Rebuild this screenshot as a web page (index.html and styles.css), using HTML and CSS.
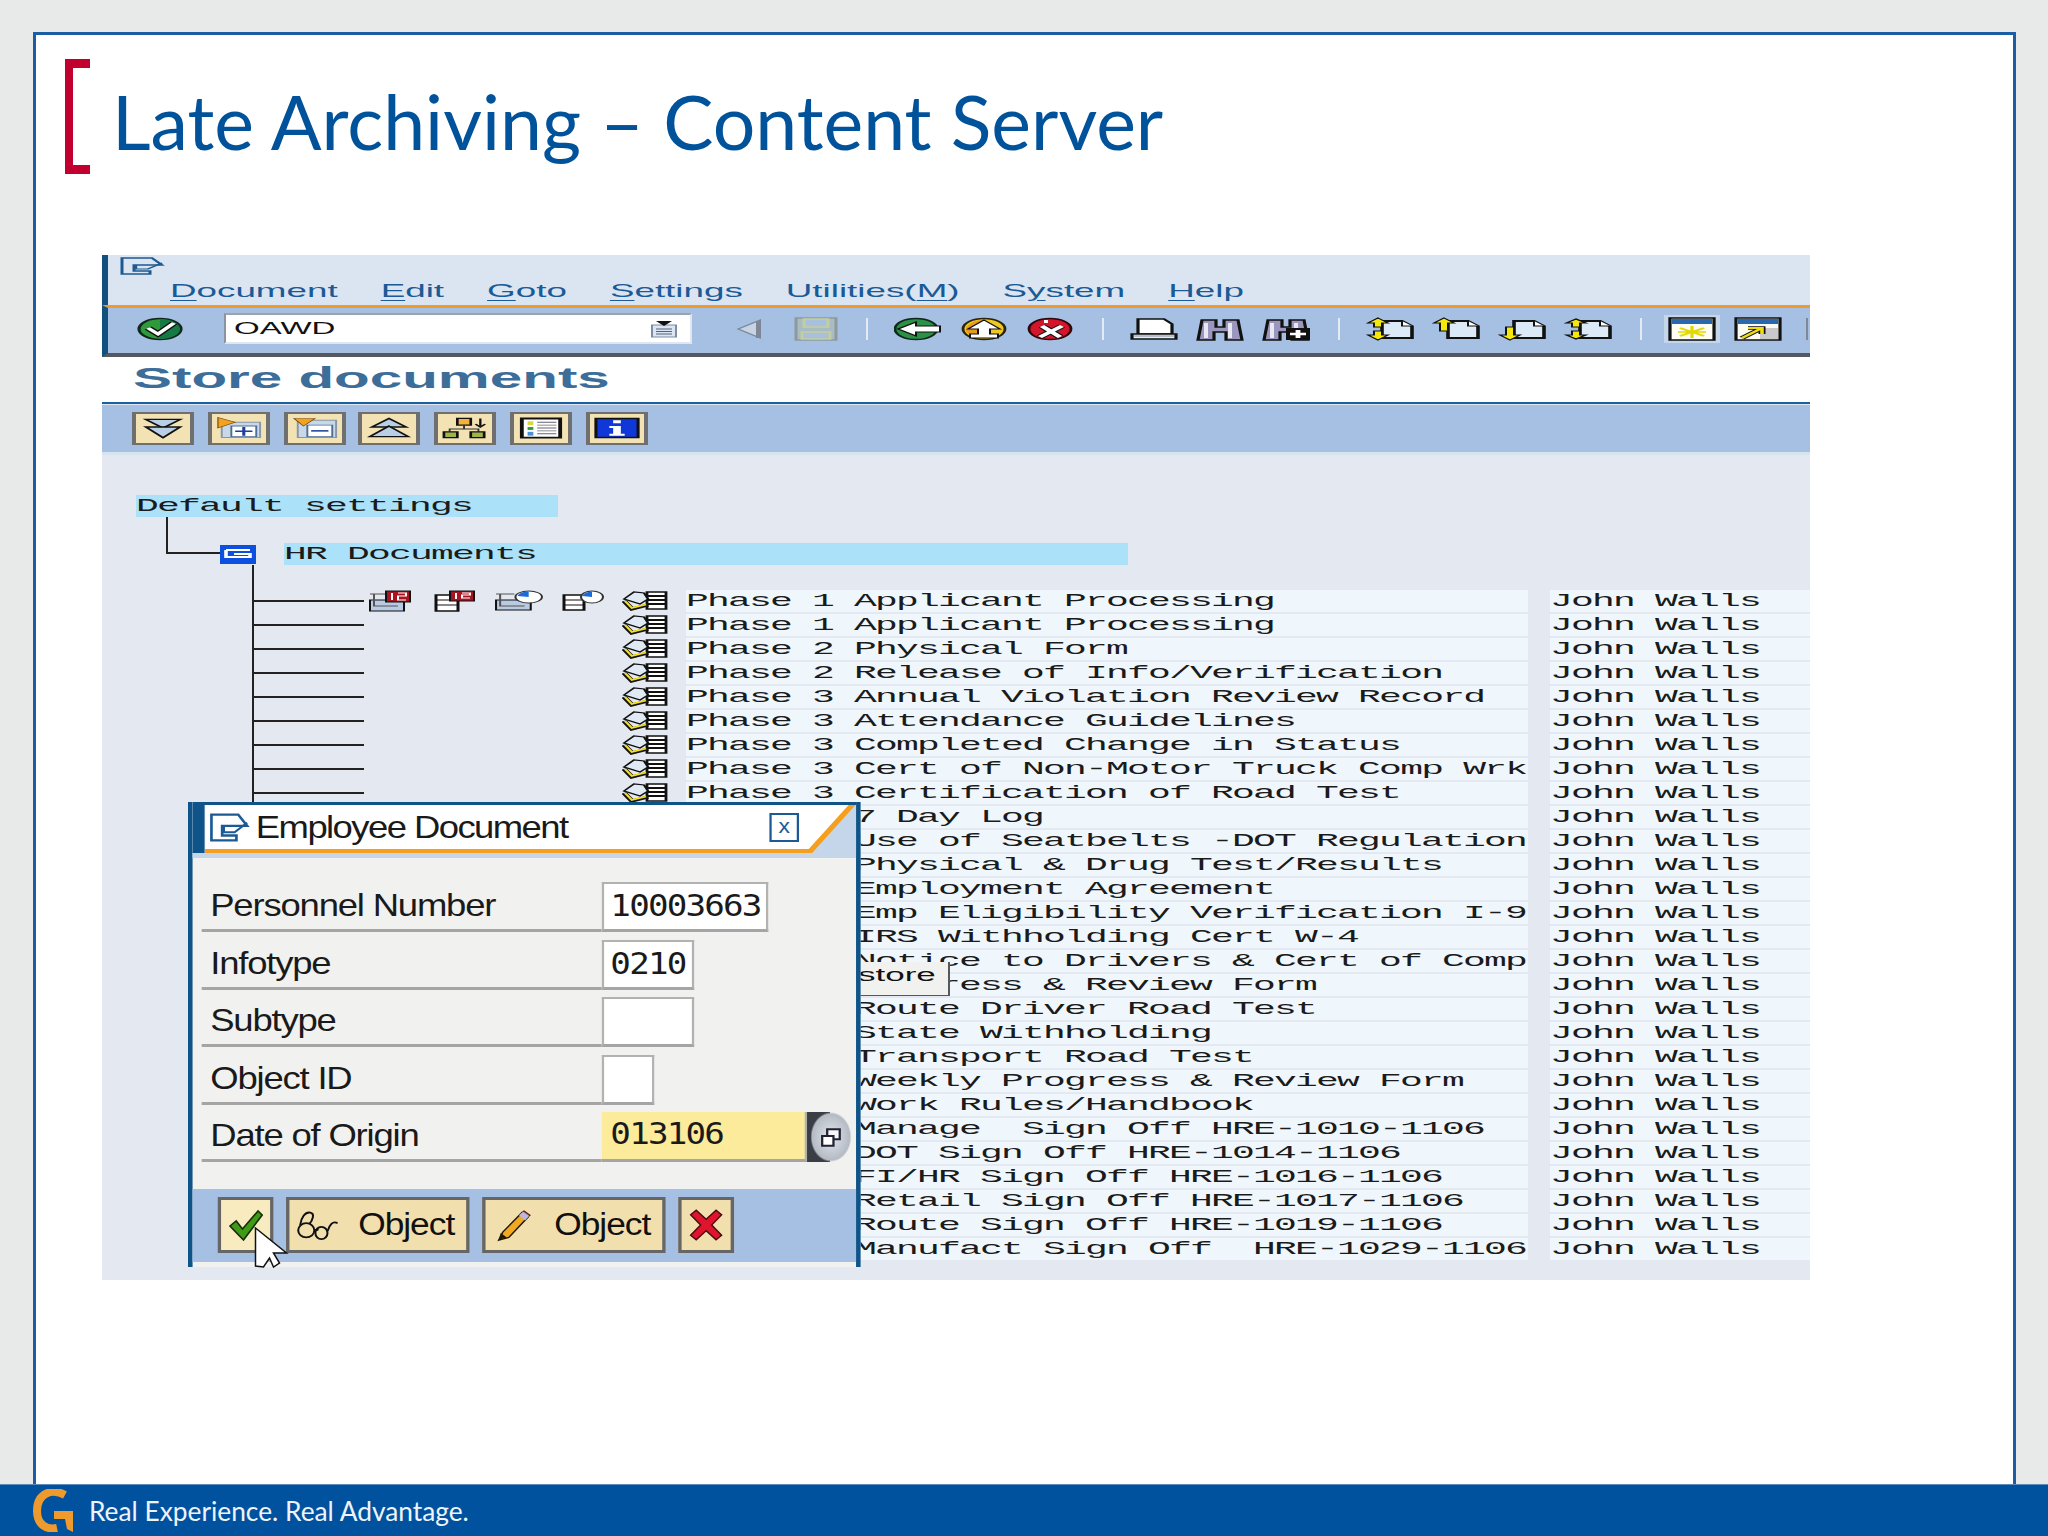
FILE: index.html
```html
<!DOCTYPE html>
<html lang="en">
<head>
  <meta charset="UTF-8">
  <title>Late Archiving - Content Server</title>
  <link rel="stylesheet" href="styles.css">
</head>
<body>
  <!-- shared icons -->
  <svg class="defs" width="0" height="0">
    <symbol id="i-doc" viewBox="0 0 23 22" preserveAspectRatio="none">
      <path d="M12.500 2h9.500v17h-9.500z" fill="#fff" stroke="#111" stroke-width="1.400"/>
      <path d="M13 6h9M13 10h9M13 14h9" stroke="#111" stroke-width="1.800"/>
      <path d="M1 9 6 2l5 1 2 6-4 5z" fill="#dfeaf4" stroke="#111" stroke-width="1.200"/>
      <path d="M1 11l4 8 8-4" fill="none" stroke="#111" stroke-width="3"/>
      <path d="M1.500 11l3.500 7 7-3.500" fill="none" stroke="#f4e010" stroke-width="1.400"/>
    </symbol>
    <symbol id="i-window" viewBox="0 0 23 18" preserveAspectRatio="none">
      <path d="M16 1H1v16h14v-3H7V8h14z" fill="none" stroke="currentColor" stroke-width="1.500"/>
      <path d="M8 8v4h6l7-6" fill="none" stroke="currentColor" stroke-width="1.200"/>
    </symbol>
    <symbol id="i-page" viewBox="0 0 24 24" preserveAspectRatio="none">
      <path d="M8 4h10l5 5v12H8z" fill="#dce9f6" stroke="#111" stroke-width="1.800"/>
      <path d="M18 4v5h5" fill="#fff" stroke="#111" stroke-width="1"/>
    </symbol>
    <symbol id="i-binoculars" viewBox="0 0 24 24" preserveAspectRatio="none">
      <path d="M3 3h7v7h4V3h7l2 20h-8v-8h-6v8H1z" fill="#9b96bd" stroke="#111" stroke-width="1.600"/>
      <path d="M4 6h2v15H4zM16 6h2v15h-2z" fill="#e8e8f2"/>
    </symbol>
  </svg>

  <div class="slide">
    <header class="slide-head">
      <div class="bracket"></div>
      <h1>Late Archiving – Content Server</h1>
    </header>

    <div class="sap-wrap">
      <div class="sap">
        <div class="menu-bar">
          <svg class="menu-icon"><use href="#i-window"/></svg>
          <ul class="menu">
            <li><u>D</u>ocument</li>
            <li><u>E</u>dit</li>
            <li><u>G</u>oto</li>
            <li><u>S</u>ettings</li>
            <li>Utilities(<u>M</u>)</li>
            <li>S<u>y</u>stem</li>
            <li><u>H</u>elp</li>
          </ul>
        </div>

        <div class="toolbar">
          <svg class="tb-icon" viewBox="0 0 24 24">
            <circle cx="12" cy="12" r="10.500" fill="#2f9a3c" stroke="#10281a" stroke-width="1.600"/>
            <path d="M12 2a10 10 0 0 1 0 20z" fill="#167a45"/>
            <path d="M6 11l5 6 8-11" fill="none" stroke="#111" stroke-width="4.500"/>
            <path d="M6 11l5 6 8-11" fill="none" stroke="#fff" stroke-width="2.500"/>
          </svg>
          <div class="cmd-field">
            <span>OAWD</span>
            <svg class="cmd-drop" viewBox="0 0 14 18" preserveAspectRatio="none">
              <path d="M1 5h12v12H1z" fill="#dbe6f2" stroke="#7c8ea3"/>
              <path d="M3 1h8L7 6z" fill="#111"/>
              <path d="M3 9h8M3 11.500h8M3 14h8" stroke="#50657d"/>
            </svg>
          </div>
          <svg class="tb-back-off" viewBox="0 0 13 24" preserveAspectRatio="none">
            <path d="M12 3v18L1 12z" fill="#c6d4e6" stroke="#7d8796"/>
            <path d="M12 3v18h-2V5z" fill="#7d8796"/>
          </svg>
          <svg class="tb-save-off" viewBox="0 0 22 24" preserveAspectRatio="none">
            <path d="M1 1h20v22H1z" fill="#a9bcc3" stroke="#8c9a9c" stroke-width="1.500"/>
            <path d="M5 2h12v8H5zM4 15h14v7H4z" fill="#a8c0dc" stroke="#c3cd9f" stroke-width="1.500"/>
          </svg>
          <i class="tb-sep"></i>
          <div class="tb-group">
            <svg class="tb-icon" viewBox="0 0 24 24">
              <circle cx="11" cy="12" r="10.500" fill="#2a9146" stroke="#10281a" stroke-width="1.400"/>
              <path d="M2 12l9-7v4h12v6H11v4z" fill="#fff" stroke="#111"/>
            </svg>
            <svg class="tb-icon" viewBox="0 0 24 24">
              <circle cx="12" cy="12" r="10.500" fill="#f0c820" stroke="#2b2410" stroke-width="1.400"/>
              <path d="M3 14a10 10 0 0 1 8-11v18a10 10 0 0 1-8-7z" fill="#e89a20"/>
              <path d="M12 3l8 9h-5v5h4v4H5v-4h4v-5H4z" fill="#fff" stroke="#111"/>
            </svg>
            <svg class="tb-icon" viewBox="0 0 24 24">
              <circle cx="12" cy="12" r="10.500" fill="#d5152a" stroke="#30080c" stroke-width="1.400"/>
              <path d="M8 9l9 11M18 9L7 20" stroke="#111" stroke-width="4.500"/>
              <path d="M8 9l9 11M18 9L7 20" stroke="#fff" stroke-width="2.800"/>
              <path d="M9 3h2v3H9z" fill="#fff"/>
            </svg>
          </div>
          <i class="tb-sep"></i>
          <div class="tb-group">
            <svg class="tb-icon" viewBox="0 0 24 24">
              <path d="M4 2h13l4 5v10H4z" fill="#fff" stroke="#111" stroke-width="1.600"/>
              <path d="M1 17h22v5H1z" fill="#e6ebf2" stroke="#111" stroke-width="1.600"/>
              <path d="M2 19h20" stroke="#8795a8"/>
            </svg>
            <svg class="tb-icon"><use href="#i-binoculars"/></svg>
            <svg class="tb-icon" viewBox="0 0 24 24">
              <use href="#i-binoculars" width="24" height="24"/>
              <path d="M12 11h12v12H12z" fill="#111"/>
              <path d="M18 13v8M14 17h8" stroke="#fff" stroke-width="2.400"/>
            </svg>
          </div>
          <i class="tb-sep"></i>
          <div class="tb-group">
            <svg class="tb-icon" viewBox="0 0 24 24">
              <use href="#i-page" width="24" height="24"/>
              <path d="M6 1l5 5H8v4H4V6H1zM6 23l5-5H8v-4H4v4H1z" fill="#f6e80c" stroke="#111"/>
            </svg>
            <svg class="tb-icon" viewBox="0 0 24 24">
              <use href="#i-page" width="24" height="24"/>
              <path d="M6 1l5 5H8v8H4V6H1z" fill="#f6e80c" stroke="#111"/>
            </svg>
            <svg class="tb-icon" viewBox="0 0 24 24">
              <use href="#i-page" width="24" height="24"/>
              <path d="M6 23l5-5H8v-8H4v8H1z" fill="#f6e80c" stroke="#111"/>
            </svg>
            <svg class="tb-icon" viewBox="0 0 24 24">
              <use href="#i-page" width="24" height="24"/>
              <path d="M6 2l5 4H8v4H4V6H1zM6 22l5-4H8v-4H4v4H1z" fill="#f6e80c" stroke="#111"/>
            </svg>
          </div>
          <i class="tb-sep"></i>
          <div class="tb-group">
            <svg class="tb-icon tb-icon-raised" viewBox="0 0 24 24">
              <path d="M1 1h22v22H1z" fill="#fdfdf4" stroke="#111" stroke-width="1.600"/>
              <path d="M2 2h20v5H2z" fill="#2a68ad"/>
              <path d="M12 9v12M6 11l12 8M18 11L6 19M5 15h14" stroke="#e3d800" stroke-width="1.600"/>
            </svg>
            <svg class="tb-icon" viewBox="0 0 24 24">
              <path d="M1 1h22v22H1z" fill="#fbfbf4" stroke="#111" stroke-width="1.600"/>
              <path d="M2 2h20v5H2z" fill="#2a68ad"/>
              <path d="M13 11h9v11H13z" fill="#c9c9c9"/>
              <path d="M4 21l9-9M7 11h7v6" fill="none" stroke="#111" stroke-width="3.500"/>
              <path d="M4 21l9-9M7 11h7v6" fill="none" stroke="#f0dc10" stroke-width="1.800"/>
            </svg>
          </div>
          <i class="tb-sep tb-sep-end"></i>
        </div>

        <div class="screen-title">Store documents</div>

        <div class="app-toolbar">
          <button class="app-btn">
            <svg viewBox="0 0 24 22">
              <path d="M3 2h18l-9 9z" fill="#b9cfe6" stroke="#111" stroke-width="1.400"/>
              <path d="M3 10h18l-9 11z" fill="#b9cfe6" stroke="#111" stroke-width="1.400"/>
            </svg>
          </button>
          <button class="app-btn">
            <svg viewBox="0 0 24 22">
              <path d="M3 5h20v16H3z" fill="#c9d8e8" stroke="#8796a8"/>
              <path d="M8 9h13v11H8z" fill="#fff" stroke="#4e6e9a"/>
              <path d="M14.500 10v9M10 14.500h9" stroke="#1c3f9c" stroke-width="1.600"/>
              <path d="M1 0l9 5-9 6z" fill="#f3a120" stroke="#6a4a10" stroke-width=".6"/>
            </svg>
          </button>
          <button class="app-btn">
            <svg viewBox="0 0 24 22">
              <path d="M3 3h20v18H3z" fill="#c9d8e8" stroke="#8796a8"/>
              <path d="M8 8h13v12H8z" fill="#fff" stroke="#4e6e9a"/>
              <path d="M10 14h9" stroke="#1c3f9c" stroke-width="1.600"/>
              <path d="M1 1h11L6 9z" fill="#f3a120" stroke="#6a4a10" stroke-width=".6"/>
            </svg>
          </button>
          <button class="app-btn">
            <svg viewBox="0 0 24 22">
              <path d="M12 1l9 9H3z" fill="#b9cfe6" stroke="#111" stroke-width="1.400"/>
              <path d="M12 9l10 11H2z" fill="#b9cfe6" stroke="#111" stroke-width="1.400"/>
            </svg>
          </button>
          <button class="app-btn">
            <svg viewBox="0 0 24 22">
              <path d="M8 1h7v7H8z" fill="#f2b33c" stroke="#111" stroke-width="1.400"/>
              <path d="M11.500 8v4M4 15v-3h15v3" fill="none" stroke="#333"/>
              <path d="M1 15h7v6H1zM15 15h7v6h-7z" fill="#9fb34a" stroke="#111" stroke-width="1.400"/>
              <path d="M20 1v8M17.500 7l2.500 3 2.500-3" fill="none" stroke="#111" stroke-width="1.200"/>
            </svg>
          </button>
          <button class="app-btn">
            <svg viewBox="0 0 24 22">
              <path d="M2 1h20v20H2z" fill="#fff" stroke="#111" stroke-width="2"/>
              <path d="M5 4h3v4H5z" fill="#d8d838"/>
              <path d="M5 10h3v3H5z" fill="#2f9a3c"/>
              <path d="M5 15h3v4H5z" fill="#4a90d8"/>
              <path d="M10 5h10M10 8h10M10 11h10M10 14h10M10 17h10" stroke="#667"/>
            </svg>
          </button>
          <button class="app-btn">
            <svg viewBox="0 0 24 22">
              <path d="M1 1h22v20H1z" fill="#1038d8" stroke="#111" stroke-width="1.600"/>
              <path d="M10 3h4v3h-4zM8 9h6v8h2v2H8v-2h2v-6H8z" fill="#fff"/>
            </svg>
          </button>
        </div>

        <div class="tree">
          <div class="tree-root">Default settings</div>
          <div class="tree-elbow"></div>
          <div class="tree-folder">
            <svg class="folder-icon" viewBox="0 0 18 20" preserveAspectRatio="none">
              <path d="M0 1h18v19H0z" fill="#0c50e0"/>
              <path d="M3 6h12M3 6v7h12v-3H7" fill="none" stroke="#fff" stroke-width="1.800"/>
            </svg>
            <span class="folder-name">HR Documents</span>
          </div>
          <ul class="doc-list">
            <li class="doc-row">
              <span class="branch"></span>
              <span class="row-icons">
                <svg class="ri-1" viewBox="0 0 22 22" preserveAspectRatio="none">
                  <path d="M1 10h17v11H1z" fill="#b8cbe2" stroke="#111"/>
                  <path d="M1 4h9M3 4v12h12" fill="none" stroke="#555"/>
                  <path d="M9 1h12v11H9z" fill="#a81420" stroke="#111"/>
                  <path d="M12 3v7M15 3h4v3h-4v4h4" fill="none" stroke="#fff"/>
                </svg>
                <svg class="ri-2" viewBox="0 0 21 22" preserveAspectRatio="none">
                  <path d="M1 5h11v16H1z" fill="#fff" stroke="#111" stroke-width="1.500"/>
                  <path d="M1 10h11M1 15h11" stroke="#111"/>
                  <path d="M8 1h12v10H8z" fill="#a81420" stroke="#111"/>
                  <path d="M11 3v6M14 3h4v2h-4v3h4" fill="none" stroke="#fff"/>
                </svg>
                <svg class="ri-3" viewBox="0 0 24 22" preserveAspectRatio="none">
                  <path d="M1 10h17v10H1z" fill="#b8cbe2" stroke="#111"/>
                  <path d="M1 4h9M3 4v12h12" fill="none" stroke="#555"/>
                  <ellipse cx="17" cy="7" rx="6.500" ry="6" fill="#fff" stroke="#333"/>
                  <path d="M17 7V1.500A6 6 0 0 0 11.500 6z" fill="#1c6ad8"/>
                </svg>
                <svg class="ri-4" viewBox="0 0 21 22" preserveAspectRatio="none">
                  <path d="M1 5h10v15H1z" fill="#fff" stroke="#111" stroke-width="1.500"/>
                  <path d="M1 10h10M1 15h10" stroke="#111"/>
                  <ellipse cx="15" cy="7" rx="5.500" ry="6" fill="#fff" stroke="#333"/>
                  <path d="M15 7V1.500A6 6 0 0 0 10 6z" fill="#1c6ad8"/>
                </svg>
              </span>
              <svg class="doc-icon"><use href="#i-doc"/></svg>
              <span class="doc-name">Phase 1 Applicant Processing</span>
              <span class="doc-user">John Walls</span>
            </li>
            <li class="doc-row"><span class="branch"></span><span class="row-icons"></span><svg class="doc-icon"><use href="#i-doc"/></svg><span class="doc-name">Phase 1 Applicant Processing</span><span class="doc-user">John Walls</span></li>
            <li class="doc-row"><span class="branch"></span><span class="row-icons"></span><svg class="doc-icon"><use href="#i-doc"/></svg><span class="doc-name">Phase 2 Physical Form</span><span class="doc-user">John Walls</span></li>
            <li class="doc-row"><span class="branch"></span><span class="row-icons"></span><svg class="doc-icon"><use href="#i-doc"/></svg><span class="doc-name">Phase 2 Release of Info/Verification</span><span class="doc-user">John Walls</span></li>
            <li class="doc-row"><span class="branch"></span><span class="row-icons"></span><svg class="doc-icon"><use href="#i-doc"/></svg><span class="doc-name">Phase 3 Annual Violation Review Record</span><span class="doc-user">John Walls</span></li>
            <li class="doc-row"><span class="branch"></span><span class="row-icons"></span><svg class="doc-icon"><use href="#i-doc"/></svg><span class="doc-name">Phase 3 Attendance Guidelines</span><span class="doc-user">John Walls</span></li>
            <li class="doc-row"><span class="branch"></span><span class="row-icons"></span><svg class="doc-icon"><use href="#i-doc"/></svg><span class="doc-name">Phase 3 Completed Change in Status</span><span class="doc-user">John Walls</span></li>
            <li class="doc-row"><span class="branch"></span><span class="row-icons"></span><svg class="doc-icon"><use href="#i-doc"/></svg><span class="doc-name">Phase 3 Cert of Non-Motor Truck Comp Wrk</span><span class="doc-user">John Walls</span></li>
            <li class="doc-row"><span class="branch"></span><span class="row-icons"></span><svg class="doc-icon"><use href="#i-doc"/></svg><span class="doc-name">Phase 3 Certification of Road Test</span><span class="doc-user">John Walls</span></li>
            <!-- the dialog sits over the start of these rows -->
            <li class="doc-row covered"><span class="doc-name">7 Day Log</span><span class="doc-user">John Walls</span></li>
            <li class="doc-row covered"><span class="doc-name">Use of Seatbelts -DOT Regulation</span><span class="doc-user">John Walls</span></li>
            <li class="doc-row covered"><span class="doc-name">Physical &amp; Drug Test/Results</span><span class="doc-user">John Walls</span></li>
            <li class="doc-row covered"><span class="doc-name">Employment Agreement</span><span class="doc-user">John Walls</span></li>
            <li class="doc-row covered"><span class="doc-name">Emp Eligibility Verification I-9</span><span class="doc-user">John Walls</span></li>
            <li class="doc-row covered"><span class="doc-name">IRS Withholding Cert W-4</span><span class="doc-user">John Walls</span></li>
            <li class="doc-row covered"><span class="doc-name">Notice to Drivers &amp; Cert of Comp</span><span class="doc-user">John Walls</span></li>
            <li class="doc-row covered"><span class="doc-name">Progress &amp; Review Form</span><span class="doc-user">John Walls</span></li>
            <li class="doc-row covered"><span class="doc-name">Route Driver Road Test</span><span class="doc-user">John Walls</span></li>
            <li class="doc-row covered"><span class="doc-name">State Withholding</span><span class="doc-user">John Walls</span></li>
            <li class="doc-row covered"><span class="doc-name">Transport Road Test</span><span class="doc-user">John Walls</span></li>
            <li class="doc-row covered"><span class="doc-name">Weekly Progress &amp; Review Form</span><span class="doc-user">John Walls</span></li>
            <li class="doc-row covered"><span class="doc-name">Work Rules/Handbook</span><span class="doc-user">John Walls</span></li>
            <li class="doc-row covered"><span class="doc-name">Manage  Sign Off HRE-1010-1106</span><span class="doc-user">John Walls</span></li>
            <li class="doc-row covered"><span class="doc-name">DOT Sign Off HRE-1014-1106</span><span class="doc-user">John Walls</span></li>
            <li class="doc-row covered"><span class="doc-name">FI/HR Sign Off HRE-1016-1106</span><span class="doc-user">John Walls</span></li>
            <li class="doc-row covered"><span class="doc-name">Retail Sign Off HRE-1017-1106</span><span class="doc-user">John Walls</span></li>
            <li class="doc-row covered"><span class="doc-name">Route Sign Off HRE-1019-1106</span><span class="doc-user">John Walls</span></li>
            <li class="doc-row covered"><span class="doc-name">Manufact Sign Off  HRE-1029-1106</span><span class="doc-user">John Walls</span></li>
          </ul>
        </div>

        <div class="tooltip">store</div>
      </div>

      <div class="dialog">
        <div class="dlg-head">
          <div class="dlg-title-edge">
            <div class="dlg-title">
              <svg class="dlg-icon"><use href="#i-window"/></svg>
              <span>Employee Document</span>
              <span class="dlg-close">x</span>
            </div>
          </div>
        </div>
        <div class="dlg-form">
          <div class="form-row">
            <label>Personnel Number</label>
            <span class="field field-8">10003663</span>
          </div>
          <div class="form-row">
            <label>Infotype</label>
            <span class="field field-4">0210</span>
          </div>
          <div class="form-row">
            <label>Subtype</label>
            <span class="field field-4"></span>
          </div>
          <div class="form-row">
            <label>Object ID</label>
            <span class="field field-2"></span>
          </div>
          <div class="form-row">
            <label>Date of Origin</label>
            <span class="field field-date">013106</span>
            <span class="match-btn">
              <svg viewBox="0 0 20 20">
                <path d="M7 3h10v9H7z" fill="#f4f6f8" stroke="#223" stroke-width="1.800"/>
                <path d="M3 9h9v9H3z" fill="#fff" stroke="#223" stroke-width="1.800"/>
              </svg>
            </span>
          </div>
        </div>
        <div class="dlg-buttons">
          <button class="dlg-btn dlg-btn-ok dlg-btn-pressed">
            <svg viewBox="0 0 34 32" preserveAspectRatio="none">
              <path d="M2 17l6-5 6 8L29 2l4 4-18 25z" fill="#3f9a14" stroke="#14300c" stroke-width="1.600"/>
            </svg>
          </button>
          <button class="dlg-btn dlg-btn-text">
            <svg class="btn-glasses" viewBox="0 0 44 34">
              <ellipse cx="11" cy="23" rx="8" ry="8" fill="none" stroke="#111" stroke-width="2"/>
              <ellipse cx="26" cy="26" rx="6" ry="7" fill="none" stroke="#111" stroke-width="2"/>
              <path d="M5 17C6 8 10 2 15 3s2 9-1 13M19 23c2-1 3-1 4 0M32 24c2-7 5-12 10-9" fill="none" stroke="#111" stroke-width="2"/>
            </svg>
            <span>Object</span>
          </button>
          <button class="dlg-btn dlg-btn-text">
            <svg class="btn-pencil" viewBox="0 0 36 36">
              <path d="M8 26L27 4l6 5-19 23-10 3z" fill="#f2a821" stroke="#221a08" stroke-width="1.500"/>
              <path d="M27 4l2-2 6 5-2 2z" fill="#c23c50" stroke="#221a08"/>
              <path d="M24 7l6 6 4-5-6-5z" fill="#b9b8e0"/>
              <path d="M4 35l2-8 6 5z" fill="#221a08"/>
            </svg>
            <span>Object</span>
          </button>
          <button class="dlg-btn dlg-btn-ok">
            <svg viewBox="0 0 32 28" preserveAspectRatio="none">
              <path d="M2 5l5-4 9 8 9-8 5 4-9 9 9 9-5 4-9-8-9 8-5-4 9-9z" fill="#e0142c" stroke="#4a0a12" stroke-width="1.300"/>
            </svg>
          </button>
        </div>
      </div>

      <svg class="cursor" viewBox="0 0 33 41">
        <path d="M1 1l31 25H19l6 10-6 4-4-9-6 9-8-1z" fill="#fff" stroke="#111" stroke-width="1.500"/>
      </svg>
    </div>
  </div>

  <footer class="slide-foot">
    <svg class="g-logo" viewBox="0 0 41 43">
      <path d="M33 6C20-1 5 4 5 22c0 14 10 19 20 17" fill="none" stroke="#ee9a2d" stroke-width="8"/>
      <path d="M22 22h19v21l-6-3-2-10H22z" fill="#ee9a2d"/>
    </svg>
    <span>Real Experience. Real Advantage.</span>
  </footer>
</body>
</html>
```

FILE: styles.css
```css
* {
  box-sizing: border-box;
}
body {
  margin: 0;
  width: 2048px;
  height: 1536px;
  display: flex;
  flex-direction: column;
  overflow: hidden;
  background-color: #e8e9e9;
  font-family: "Liberation Sans", Arial, sans-serif;
}
.defs {
  position: absolute;
}
ul {
  list-style: none;
  margin: 0;
  padding: 0;
}

/* slide frame */
.slide {
  flex: 1;
  margin: 32px 32px 0 33px;
  background-color: #fff;
  border: 3px solid #1c5ea3;
  border-bottom: none;
}
.slide-head {
  display: flex;
  align-items: flex-start;
  padding: 24px 0 0 29px;
  height: 220px;
}
.bracket {
  flex: none;
  width: 25px;
  height: 115px;
  border-left: 8px solid #c2002f;
  border-top: 9px solid #c2002f;
  border-bottom: 9px solid #c2002f;
}
h1 {
  margin: 17px 0 0 22px;
  font-family: Lato, "Open Sans", sans-serif;
  font-size: 75.200px;
  line-height: 90px;
  font-weight: 400;
  color: #00529b;
}
.slide-foot {
  height: 52px;
  display: flex;
  align-items: center;
  gap: 16px;
  padding-left: 32px;
  background-color: #00529f;
  border-top: 1px solid #5b8cc0;
  color: #eef4fa;
  font-family: Lato, "Open Sans", sans-serif;
  font-size: 26.300px;
}
.g-logo {
  width: 41px;
  height: 43px;
}

/* the SAP screenshot is twice as wide as it is tall, so it is stretched */
.sap-wrap {
  position: relative;
  margin-left: 66px;
  width: 1707px;
  height: 1025px;
}
.sap {
  position: relative;
  width: 853.5px;
  height: 1025px;
  overflow: hidden;
  background-color: #e4e8f0;
  transform: scaleX(2);
  transform-origin: 0 0;
}
.menu-bar {
  height: 50px;
  position: relative;
  background-color: #dbe4f1;
  border-left: 3px solid #12507f;
}
.menu-icon {
  position: absolute;
  left: 6px;
  top: 2px;
  width: 23px;
  height: 18px;
  color: #1d5a92;
}
.menu {
  display: flex;
  gap: 21.500px;
  padding: 25px 0 0 31px;
  font-size: 18.400px;
  line-height: 22px;
  color: #1a5a96;
}
.menu u {
  text-underline-offset: 3px;
}
.toolbar {
  height: 52px;
  display: flex;
  align-items: center;
  padding: 0 0 4px 13.5px;
  background-color: #a6c0e3;
  border-top: 3px solid #ee9a2d;
  border-left: 3px solid #12507f;
  border-bottom: 4px solid #55595f;
}
.tb-icon {
  width: 24px;
  height: 24px;
  flex: none;
}
.tb-icon-raised {
  outline: 2px solid #c6d6ea;
}
.tb-group {
  display: flex;
  gap: 9px;
}
.tb-sep {
  flex: none;
  width: 1px;
  height: 22px;
  margin: 0 13.5px;
  background-color: #e4ebf4;
}
.tb-sep-end {
  margin-right: 0;
  margin-left: 12px;
  background-color: #7e8896;
}
.cmd-field {
  flex: none;
  width: 234px;
  height: 31px;
  margin-left: 20.5px;
  padding: 0 6px 0 4px;
  display: flex;
  align-items: center;
  justify-content: space-between;
  background-color: #fff;
  border: 1px solid #8b949e;
  border-width: 2px 1px;
  border-color: #9aa2ab #dfe6ee #dfe6ee #8b949e;
  font-size: 16.500px;
  color: #111;
}
.cmd-drop {
  width: 14px;
  height: 18px;
}
.tb-back-off {
  flex: none;
  width: 13px;
  height: 24px;
  margin-left: 22px;
}
.tb-save-off {
  flex: none;
  width: 22px;
  height: 24px;
  margin-left: 16px;
}
.screen-title {
  height: 45px;
  padding-left: 15.500px;
  background-color: #fff;
  font-size: 29.200px;
  line-height: 43px;
  font-weight: bold;
  color: #3d6d99;
}
.app-toolbar {
  height: 50px;
  display: flex;
  align-items: center;
  gap: 6.800px;
  padding-left: 15px;
  background-color: #a5c0e3;
  border-top: 2px solid #1c5f9e;
  box-shadow: inset 0 1px #dfe8f2;
}
.app-btn {
  flex: none;
  width: 31px;
  height: 33px;
  padding: 0 2px;
  display: flex;
  align-items: center;
  background-color: #f3e2b4;
  border: 2px solid #6f6f6f;
}
.app-btn svg {
  width: 100%;
  height: 24px;
}

/* tree */
.tree {
  border-top: 3px solid #d7e3ee;
  padding-top: 40px;
}
.tree-root,
.folder-name,
.doc-name,
.doc-user {
  font-family: "Liberation Mono", "DejaVu Sans Mono", monospace;
  font-size: 19px;
  letter-spacing: -.9px;
  line-height: 22px;
  color: #1b1b1b;
  white-space: pre;
}
.tree-root {
  width: 211px;
  height: 22px;
  margin-left: 17px;
  background-color: #abe2f9;
}
.tree-elbow {
  width: 27px;
  height: 37px;
  margin-left: 32px;
  margin-bottom: -11px;
  border-left: 1px solid #222;
  border-bottom: 2px solid #222;
}
.tree-folder {
  display: flex;
  align-items: center;
  height: 22px;
  padding-left: 59px;
}
.folder-icon {
  width: 18px;
  height: 20px;
}
.folder-name {
  width: 422px;
  margin-left: 14px;
  background-color: #abe2f9;
}
.doc-list {
  margin-left: 75px;
  padding-top: 24.500px;
  border-left: 1px solid #222;
}
.doc-row {
  display: flex;
  align-items: center;
  height: 22px;
  margin-bottom: 2px;
}
.branch {
  flex: none;
  width: 55px;
  height: 2px;
  background-color: #222;
}
.row-icons {
  flex: none;
  width: 128.5px;
  padding-left: 2px;
  display: flex;
}
.ri-1 {
  width: 22px;
  height: 22px;
}
.ri-2 {
  width: 21px;
  height: 22px;
  margin-left: 11px;
}
.ri-3 {
  width: 24.500px;
  height: 22px;
  margin-left: 9px;
}
.ri-4 {
  width: 21px;
  height: 22px;
  margin-left: 9px;
}
.doc-icon {
  flex: none;
  width: 23px;
  height: 22px;
}
.doc-name {
  flex: none;
  width: 421px;
  height: 22px;
  margin-left: 9.500px;
  background-color: #f0f7fc;
}
.doc-user {
  flex: none;
  width: 130px;
  height: 22px;
  margin-left: 11px;
  background-color: #f0f7fc;
}
.covered .doc-name {
  margin-left: 216px;
  padding-left: 84px;
}
.tooltip {
  position: absolute;
  left: 377px;
  top: 707px;
  width: 46.500px;
  height: 34px;
  padding-left: 1px;
  background-color: #f1f1ef;
  border-right: 1px solid #55595f;
  border-bottom: 1px solid #55595f;
  font-size: 17.500px;
  line-height: 27px;
  color: #111;
}

/* dialog: not as wide as the main screen, so its own stretch */
.dialog {
  position: absolute;
  left: 85.500px;
  top: 547px;
  width: 589.500px;
  height: 465px;
  background-color: #f1f2f0;
  border-left: 4.500px solid #0e5489;
  border-right: 4.500px solid #0e5489;
  transform: scaleX(1.14);
  transform-origin: 0 0;
}
.dlg-head {
  height: 56px;
  padding: 0 0 5px 10.500px;
  background: linear-gradient(#0e5489, #0e5489) 0 0 / 10.500px 48px no-repeat, #c6d6ea;
  border-top: 3px solid #0e5489;
}
.dlg-title-edge {
  height: 48px;
  background-color: #f59f1c;
  clip-path: polygon(0 0, 100% 0, calc(100% - 38px) 100%, 0 100%);
}
.dlg-title {
  height: 44px;
  display: flex;
  align-items: center;
  padding-left: 4px;
  background-color: #fff;
  clip-path: polygon(0 0, calc(100% - 6px) 0, calc(100% - 41px) 100%, 0 100%);
  font-size: 32px;
  letter-spacing: -1.390px;
  color: #1a1a1a;
}
.dlg-icon {
  flex: none;
  width: 36px;
  height: 29px;
  margin-right: 5px;
  color: #1c5a96;
}
.dlg-close {
  flex: none;
  width: 26px;
  height: 29px;
  margin-left: 177px;
  background-color: #fff;
  border: 2.500px solid #1c5a96;
  color: #1c5a96;
  font-size: 20px;
  letter-spacing: 0;
  line-height: 22px;
  text-align: center;
}
.dlg-form {
  padding: 24px 0 27px 7.500px;
}
.form-row {
  display: flex;
  height: 50px;
  margin-bottom: 7.500px;
  font-size: 32px;
  letter-spacing: -1.050px;
  color: #1a1a1a;
}
.form-row:last-child {
  margin-bottom: 0;
}
.form-row label {
  flex: none;
  width: 351px;
  padding-left: 8px;
  line-height: 47px;
  border-bottom: 3px solid #a5a5a5;
}
.field {
  flex: none;
  padding-left: 6px;
  background-color: #fff;
  border: 2px solid #b2b2b0;
  border-bottom-width: 3px;
  border-bottom-color: #a5a5a5;
  font-family: "DejaVu Sans Mono", "Liberation Mono", monospace;
  font-size: 30px;
  line-height: 43px;
  letter-spacing: -1.600px;
}
.field-8 {
  width: 146px;
}
.field-4 {
  width: 81px;
}
.field-2 {
  width: 46.500px;
}
.field-date {
  width: 180px;
  background-color: #fdeb9c;
  border-top: none;
  border-left: none;
  padding-left: 8px;
}
.match-btn {
  flex: none;
  width: 40px;
  height: 50px;
  padding-left: 10px;
  display: flex;
  align-items: center;
  background:
    radial-gradient(ellipse 18px 25px at 21px 50%, #e2e6ec 0, #b5bbc4 92%, transparent 100%),
    linear-gradient(90deg, #3b3f45 50%, transparent 50%);
}
.match-btn svg {
  width: 22px;
  height: 22px;
}
.dlg-buttons {
  height: 73px;
  display: flex;
  gap: 11px;
  padding: 8px 0 0 21.500px;
  background-color: #a5c0e3;
}
.dlg-btn {
  flex: none;
  height: 56px;
  padding: 0;
  display: flex;
  align-items: center;
  background-color: #f2dfae;
  border: 3px solid #666;
  font-family: inherit;
  font-size: 31px;
  letter-spacing: -.9px;
  color: #111;
}
.dlg-btn-pressed {
  background-color: #f8ebc0;
}
.dlg-btn-ok {
  width: 49px;
  padding: 0 6px;
  justify-content: center;
}
.dlg-btn-ok svg {
  width: 32px;
  height: 32px;
}
.dlg-btn-text {
  width: 161px;
}
.dlg-btn-text span {
  margin-left: auto;
  margin-right: 10px;
}
.btn-glasses {
  width: 39px;
  height: 32px;
  margin-left: 5px;
}
.btn-pencil {
  width: 32px;
  height: 36px;
  margin-left: 8px;
}
.cursor {
  position: absolute;
  left: 151px;
  top: 972px;
  width: 36px;
  height: 41px;
}
```
